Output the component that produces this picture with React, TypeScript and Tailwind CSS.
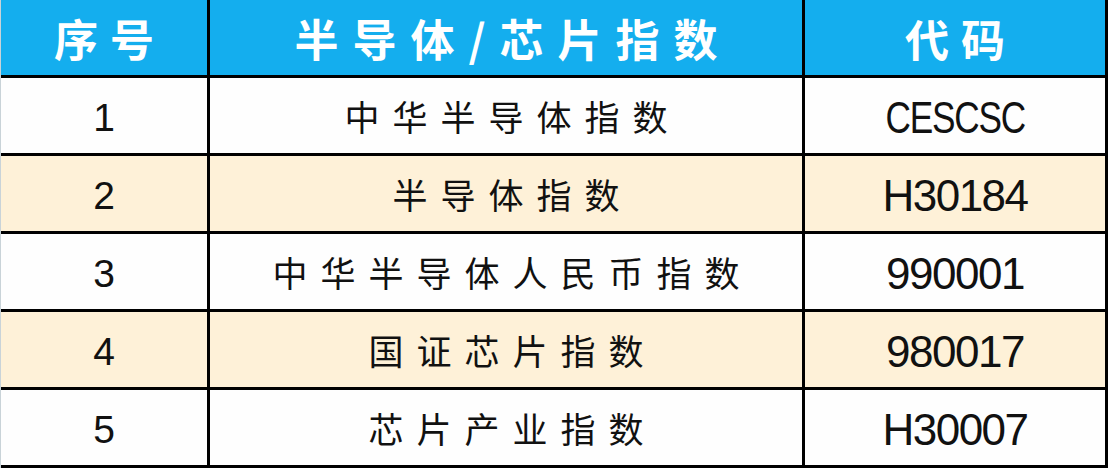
const rows = [
  { no: "1", name: "中华半导体指数", code: "CESCSC" },
  { no: "2", name: "半导体指数", code: "H30184" },
  { no: "3", name: "中华半导体人民币指数", code: "990001" },
  { no: "4", name: "国证芯片指数", code: "980017" },
  { no: "5", name: "芯片产业指数", code: "H30007" },
];

const cjk = "font-['Noto_Sans_CJK_SC',sans-serif]";
const latin = "font-['Liberation_Sans',Arial,sans-serif]";

export default function App() {
  return (
    <div className="w-[1108px] h-[468px] bg-white border-l border-[#c9d3d8] overflow-hidden">
      {/* header */}
      <div className="flex h-[78px] bg-[#14aeee] border-b-[3px] border-black text-white">
        <div className={`w-[209px] flex items-center justify-center border-r-[3px] border-black text-[44px] font-bold tracking-[12px] pl-[12px] ${cjk}`}>
          序号
        </div>
        <div className={`w-[595px] flex items-center justify-center border-r-[3px] border-black text-[44px] font-bold tracking-[14px] pl-[14px] ${cjk}`}>
          半导体/芯片指数
        </div>
        <div className={`flex-1 flex items-center justify-center border-r-[3px] border-black text-[44px] font-bold tracking-[12px] pl-[12px] ${cjk}`}>
          代码
        </div>
      </div>

      {rows.map((r, i) => (
        <div
          key={r.no}
          className={`flex h-[78px] border-b-[3px] border-black text-[#111] ${i % 2 === 1 ? "bg-[#fef1d8]" : "bg-[#fefefe]"}`}
        >
          <div className={`w-[209px] flex items-center justify-center pt-[6px] border-r-[3px] border-black text-[39px] ${latin}`}>
            {r.no}
          </div>
          <div className={`w-[595px] flex items-center justify-center pt-[2px] border-r-[3px] border-black text-[35px] tracking-[13px] pl-[13px] ${cjk}`}>
            {r.name}
          </div>
          <div className={`flex-1 flex items-center justify-center pt-[4px] border-r-[3px] border-black text-[44px] tracking-[-1.5px] ${latin}`}>
            <span className={/^\d|^H/.test(r.code) ? "" : "inline-block scale-x-[0.8]"}>{r.code}</span>
          </div>
        </div>
      ))}
    </div>
  );
}
